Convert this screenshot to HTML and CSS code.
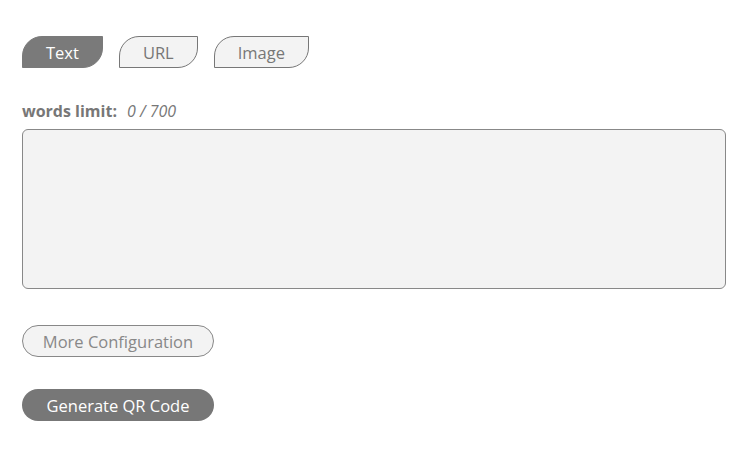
FILE: index.html
```html
<!DOCTYPE html>
<html>
<head>
<meta charset="utf-8">
<link rel="stylesheet" href="styles.css">
</head>
<body>
<div class="page">
  <div class="tabs">
    <button class="tab active">Text</button>
    <button class="tab">URL</button>
    <button class="tab">Image</button>
  </div>
  <div class="limit"><span class="limit-label">words limit:</span><span class="limit-count">0 / 700</span></div>
  <textarea class="input"></textarea>
  <button class="pill config">More Configuration</button>
  <button class="pill generate">Generate QR Code</button>
</div>
</body>
</html>
```
FILE: styles.css
```css
html, body {
  margin: 0;
  padding: 0;
  background: #fff;
}
.page {
  padding: 36px 24px 0 22px;
  display: flex;
  flex-direction: column;
  align-items: flex-start;
  font-family: "Open Sans", "Noto Sans", sans-serif;
  color: #777;
}
.tabs {
  display: flex;
  gap: 16px;
}
.tab {
  height: 32px;
  padding: 0 23px;
  border: 1px solid #777;
  border-radius: 20px 0 20px 0;
  background: #f3f3f3;
  color: #777;
  font-family: inherit;
  font-size: 16.5px;
}
.tab.active {
  background: #7a7a7a;
  border-color: #7a7a7a;
  color: #fff;
}
.limit {
  margin-top: 32px;
  font-size: 16px;
  line-height: 22px;
  display: flex;
  gap: 10px;
}
.limit-label {
  font-weight: 700;
}
.limit-count {
  font-style: italic;
}
.input {
  margin-top: 7px;
  width: 704px;
  height: 160px;
  box-sizing: border-box;
  border: 1px solid #888;
  border-radius: 6px;
  background: #f3f3f3;
  resize: none;
}
.pill {
  width: 192px;
  height: 32px;
  border-radius: 16px;
  font-family: inherit;
  font-size: 16.5px;
}
.config {
  margin-top: 36px;
  border: 1px solid #888;
  background: #f3f3f3;
  color: #888;
}
.generate {
  margin-top: 32px;
  border: none;
  background: #777;
  color: #fff;
}
```
